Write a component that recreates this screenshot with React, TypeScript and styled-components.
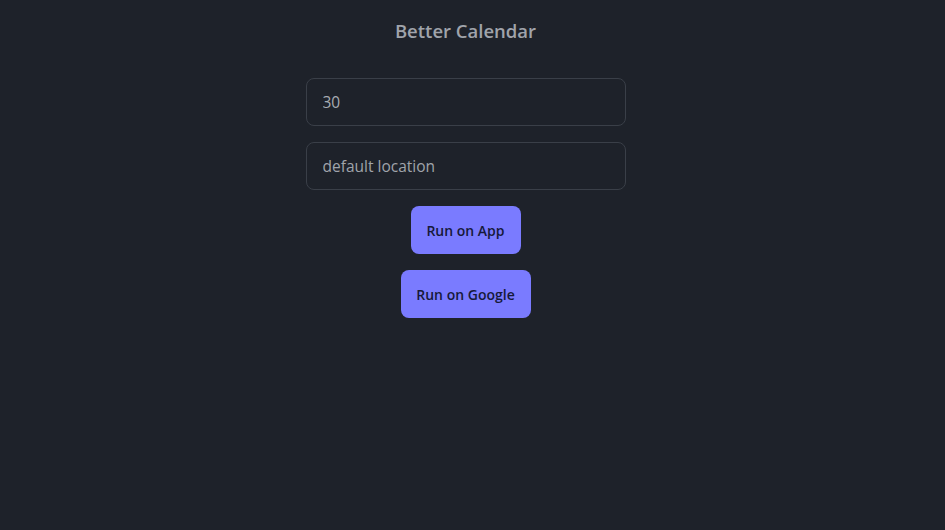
import React from "react";
import styled, { createGlobalStyle } from "styled-components";

const Global = createGlobalStyle`
  html, body { margin: 0; padding: 0; background: #1e222a; }
  body { font-family: "Open Sans", "Noto Sans", "Liberation Sans", sans-serif; }
  * { box-sizing: border-box; }
`;

const Page = styled.main`
  min-height: 530px;
  display: flex;
  flex-direction: column;
  align-items: center;
  padding: 17px 14px 0 0;
  background: #1e222a;
`;

const Title = styled.h1`
  margin: 0 0 33px;
  font-size: 18.5px;
  line-height: 28px;
  font-weight: 600;
  color: #a0a4ab;
`;

const Form = styled.div`
  display: flex;
  flex-direction: column;
  align-items: center;
  gap: 16px;
`;

const Field = styled.input`
  width: 320px;
  height: 48px;
  padding: 0 16px;
  border: 1px solid #3a3f48;
  border-radius: 8px;
  background: #1e222a;
  color: #a7abb2;
  font-family: inherit;
  font-size: 15.5px;
  outline: none;
  &::placeholder { color: #a0a4ab; }
`;

const Button = styled.button<{ $w: number }>`
  width: ${(p) => p.$w}px;
  height: 48px;
  border: none;
  border-radius: 8px;
  background: #7a7bff;
  color: #16193a;
  font-family: inherit;
  font-size: 14px;
  font-weight: 600;
  cursor: pointer;
`;

export default function App() {
  return (
    <>
      <Global />
      <Page>
        <Title>Better Calendar</Title>
        <Form>
          <Field defaultValue="30" />
          <Field placeholder="default location" />
          <Button $w={110}>Run on App</Button>
          <Button $w={130}>Run on Google</Button>
        </Form>
      </Page>
    </>
  );
}
